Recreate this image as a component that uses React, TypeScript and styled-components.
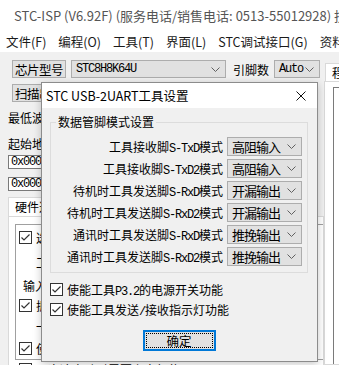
import React from 'react'
import styled, { createGlobalStyle } from 'styled-components'

const GlobalStyle = createGlobalStyle`
  html, body {
    margin: 0;
    padding: 0;
    background: #f0f0f0;
  }
  body {
    font-family: "Noto Sans CJK SC", sans-serif;
    color: #000;
  }
`

const Screen = styled.div`
  position: relative;
  width: 339px;
  height: 365px;
  overflow: hidden;
  background: #f0f0f0;
  display: flex;
  flex-direction: column;
`

const TitleBar = styled.div`
  height: 30px;
  flex-shrink: 0;
  display: flex;
  align-items: center;
  gap: 7px;
  padding-left: 7px;
  background: #fff;
  color: #555;
  font-size: 13px;
  white-space: nowrap;
`

const MenuBar = styled.div`
  height: 22px;
  flex-shrink: 0;
  display: flex;
  align-items: center;
  background: #fff;
  color: #1a1a1a;
  font-size: 12.5px;
  white-space: nowrap;
`

const MenuItem = styled.span`
  padding: 0 6px;
`

const Main = styled.div`
  flex: 1;
  display: flex;
  min-height: 0;
`

const LeftPane = styled.div`
  width: 316px;
  flex-shrink: 0;
  padding: 8px 0 0 8px;
  display: flex;
  flex-direction: column;
`

const ToolRow = styled.div<{ $top?: number }>`
  display: flex;
  align-items: center;
  gap: 5px;
  height: 18px;
  margin-left: 4px;
  margin-top: ${(p) => p.$top ?? 0}px;
  font-size: 12px;
  white-space: nowrap;
`

const PushButton = styled.div`
  box-sizing: border-box;
  width: 54px;
  height: 18px;
  border: 1px solid #adadad;
  background: #e1e1e1;
  display: flex;
  align-items: center;
  justify-content: center;
  font-size: 12.5px;
  letter-spacing: -0.5px;
  flex-shrink: 0;
`

const Combo = styled.div<{ $width: number; $height: number }>`
  box-sizing: border-box;
  width: ${(p) => p.$width}px;
  height: ${(p) => p.$height}px;
  border: 1px solid #adadad;
  background: #e1e1e1;
  display: flex;
  align-items: center;
  justify-content: space-between;
  padding: 0 5px 0 4px;
  font-size: 13px;
  letter-spacing: -1px;
  flex-shrink: 0;
`

const PinLabel = styled.span`
  margin-left: 2px;
`

const Latin = styled.span`
  font-family: "Liberation Mono", monospace;
  font-size: 12px;
  letter-spacing: -1.2px;
`

const FieldLabel = styled.div<{ $top: number; $left?: number }>`
  margin-top: ${(p) => p.$top}px;
  margin-left: ${(p) => p.$left ?? 0}px;
  height: 16px;
  line-height: 16px;
  font-size: 12px;
  white-space: nowrap;
`

const TextBox = styled.div<{ $top: number }>`
  box-sizing: border-box;
  margin-top: ${(p) => p.$top}px;
  width: 90px;
  height: 14px;
  border: 1px solid #7a7a7a;
  background: #fff;
  display: flex;
  align-items: center;
  padding-left: 2px;
`

const TabHeader = styled.div<{ $top: number }>`
  align-self: flex-start;
  box-sizing: border-box;
  margin-top: ${(p) => p.$top}px;
  height: 19px;
  padding: 0 6px;
  border: 1px solid #d9d9d9;
  border-bottom: none;
  background: #fff;
  font-size: 12px;
  line-height: 18px;
  white-space: nowrap;
`

const TabBody = styled.div`
  flex: 1;
  border: 1px solid #d9d9d9;
  background: #fff;
  padding: 7px 0 0 6px;
  display: flex;
  flex-direction: column;
`

const OptionGroup = styled.div`
  box-sizing: border-box;
  height: 136px;
  border: 1px solid #a0a0a0;
  border-right: none;
  padding: 5px 0 0 3px;
  display: flex;
  flex-direction: column;
`

const CheckRow = styled.div<{ $top: number; $left?: number }>`
  display: flex;
  align-items: center;
  gap: 4px;
  margin-top: ${(p) => p.$top}px;
  margin-left: ${(p) => p.$left ?? 0}px;
  height: 13px;
  font-size: 12px;
  white-space: nowrap;
`

const Box = styled.span`
  box-sizing: border-box;
  width: 13px;
  height: 13px;
  border: 1px solid #333;
  background: #fff;
  display: inline-flex;
  align-items: center;
  justify-content: center;
  flex-shrink: 0;
`

const RightPane = styled.div`
  flex: 1;
  padding-top: 11px;
  display: flex;
  flex-direction: column;
`

const SideTab = styled.div`
  align-self: flex-start;
  box-sizing: border-box;
  height: 18px;
  margin-left: 1px;
  padding: 0 6px;
  border: 1px solid #d9d9d9;
  border-bottom: none;
  background: #fff;
  font-size: 12px;
  line-height: 17px;
  white-space: nowrap;
`

const SidePanel = styled.div`
  flex: 1;
  border: 1px solid #d9d9d9;
  border-right: none;
  background: #fff;
  padding: 5px 0 0 8px;
  display: flex;
`

const SideInner = styled.div`
  flex: 1;
  border: 1px solid #7a7a7a;
  border-right: none;
  border-bottom: none;
`

/* ---- dialog ---- */

const Dialog = styled.div`
  position: absolute;
  left: 41px;
  top: 82px;
  width: 277px;
  height: 280px;
  box-sizing: border-box;
  border: 1px solid #8c8c8c;
  background: #f0f0f0;
  box-shadow: 0 2px 8px rgba(0, 0, 0, 0.22);
  display: flex;
  flex-direction: column;
`

const DialogTitle = styled.div`
  height: 25px;
  flex-shrink: 0;
  display: flex;
  align-items: center;
  padding-left: 4px;
  background: #fff;
  font-size: 12.5px;
  white-space: nowrap;
`

const DialogTitleText = styled.span`
  flex: 1;
`

const CloseButton = styled.div`
  width: 32px;
  height: 25px;
  display: flex;
  align-items: center;
  justify-content: center;
`

const DialogBody = styled.div`
  flex: 1;
  display: flex;
  flex-direction: column;
  padding: 6px 9px 0 8px;
`

const GroupBox = styled.fieldset`
  margin: 0;
  padding: 7px 5px 6px 5px;
  border: 1px solid #dcdcdc;
  min-width: 0;
`

const GroupLegend = styled.legend`
  padding: 0 2px;
  font-size: 12px;
  line-height: 16px;
`

const ModeGrid = styled.div`
  display: grid;
  grid-template-columns: 1fr 75px;
  column-gap: 4px;
  row-gap: 3px;
  align-items: center;
`

const ModeLabel = styled.span`
  text-align: right;
  font-size: 12px;
  white-space: nowrap;
`

const DialogChecks = styled.div`
  display: flex;
  flex-direction: column;
`

const OkButton = styled.div`
  align-self: center;
  box-sizing: border-box;
  margin-top: 14px;
  width: 73px;
  height: 21px;
  border: 2px solid #0078d7;
  background: #e1e1e1;
  padding: 1px;
  display: flex;
`

const FocusRect = styled.span`
  flex: 1;
  border: 1px dotted #000;
  display: flex;
  align-items: center;
  justify-content: center;
  font-size: 12.5px;
`

const mixed = (text: string) =>
  text.split(/([\x20-\x7e]+)/).map((part, i) =>
    /^[\x20-\x7e]+$/.test(part) ? <Latin key={i}>{part}</Latin> : part
  )

const Chevron = () => (
  <svg width="9" height="5" viewBox="0 0 9 5">
    <polyline points="0.5,0.5 4.5,4.5 8.5,0.5" fill="none" stroke="#606060" strokeWidth="1" />
  </svg>
)

const Check = () => (
  <Box>
    <svg width="11" height="11" viewBox="0 0 11 11">
      <polyline points="1.5,5.5 4,8 9.5,2.5" fill="none" stroke="#333" strokeWidth="1.2" />
    </svg>
  </Box>
)

const AppIcon = () => (
  <svg width="14" height="14" viewBox="0 0 14 14">
    <g fill="none" stroke="#e8336b" strokeWidth="1.3">
      <path d="M1 5 A8 8 0 0 1 9 13" />
      <path d="M1 2 A11 11 0 0 1 12 13" />
      <path d="M1 8 A5 5 0 0 1 6 13" />
    </g>
    <g stroke="#2456c8" strokeWidth="0.9">
      <path d="M0.5 10.5 H5 M0.5 12.5 H5 M1.5 9.5 V13.5 M3.5 9.5 V13.5" />
      <path d="M10 11 H13.5 M10 12.8 H13.5 M11 10 V13.5 M12.8 10 V13.5" />
    </g>
  </svg>
)

const pinModes: [string, string][] = [
  ['工具接收脚S-TxD模式', '高阻输入'],
  ['工具接收脚S-TxD2模式', '高阻输入'],
  ['待机时工具发送脚S-RxD模式', '开漏输出'],
  ['待机时工具发送脚S-RxD2模式', '开漏输出'],
  ['通讯时工具发送脚S-RxD模式', '推挽输出'],
  ['通讯时工具发送脚S-RxD2模式', '推挽输出'],
]

const menus = ['文件(F)', '编程(O)', '工具(T)', '界面(L)', 'STC调试接口(G)', '资料下载(D)']

export default function App() {
  return (
    <Screen>
      <GlobalStyle />
      <TitleBar>
        <AppIcon />
        <span>STC-ISP (V6.92F) (服务电话/销售电话: 0513-55012928) 技术支持</span>
      </TitleBar>
      <MenuBar>
        {menus.map((m) => (
          <MenuItem key={m}>{m}</MenuItem>
        ))}
      </MenuBar>
      <Main>
        <LeftPane>
          <ToolRow>
            <PushButton>芯片型号</PushButton>
            <Combo $width={155} $height={18}>
              <Latin>STC8H8K64U</Latin>
              <Chevron />
            </Combo>
            <PinLabel>引脚数</PinLabel>
            <Combo $width={46} $height={18}>
              <Latin>Auto</Latin>
              <Chevron />
            </Combo>
          </ToolRow>
          <ToolRow $top={6}>
            <PushButton>扫描串口</PushButton>
          </ToolRow>
          <FieldLabel $top={8}>最低波特率</FieldLabel>
          <FieldLabel $top={10}>起始地址</FieldLabel>
          <TextBox $top={3}>
            <Latin>0x0000</Latin>
          </TextBox>
          <TextBox $top={8}>
            <Latin>0x0000</Latin>
          </TextBox>
          <TabHeader $top={6}>硬件选项</TabHeader>
          <TabBody>
            <OptionGroup>
              <CheckRow $top={1}>
                <Check />
                <span>选择使用内部IRC时钟</span>
              </CheckRow>
              <FieldLabel $top={11} $left={17}>工作在内部时钟</FieldLabel>
              <FieldLabel $top={7} $left={4}>{mixed('输入用户程序运行时的IRC频率')}</FieldLabel>
              <CheckRow $top={5}>
                <Check />
                <span>振荡器放大增益</span>
              </CheckRow>
              <FieldLabel $top={7} $left={17}>一般不需要选择</FieldLabel>
              <CheckRow $top={7}>
                <Check />
                <span>使用快速下载模式</span>
              </CheckRow>
            </OptionGroup>
            <CheckRow $top={3} $left={4}>
              <Box />
              <span>下次冷启动时需要上电复位</span>
            </CheckRow>
          </TabBody>
        </LeftPane>
        <RightPane>
          <SideTab>程序文件</SideTab>
          <SidePanel>
            <SideInner />
          </SidePanel>
        </RightPane>
      </Main>

      <Dialog>
        <DialogTitle>
          <DialogTitleText>STC USB-2UART工具设置</DialogTitleText>
          <CloseButton>
            <svg width="10" height="10" viewBox="0 0 10 10">
              <path d="M0.5 0.5 L9.5 9.5 M9.5 0.5 L0.5 9.5" stroke="#111" strokeWidth="1" />
            </svg>
          </CloseButton>
        </DialogTitle>
        <DialogBody>
          <GroupBox>
            <GroupLegend>数据管脚模式设置</GroupLegend>
            <ModeGrid>
              {pinModes.map(([label, mode]) => (
                <React.Fragment key={label}>
                  <ModeLabel>{mixed(label)}</ModeLabel>
                  <Combo $width={75} $height={19}>
                    <span>{mode}</span>
                    <Chevron />
                  </Combo>
                </React.Fragment>
              ))}
            </ModeGrid>
          </GroupBox>
          <DialogChecks>
            <CheckRow $top={10}>
              <Check />
              <span>{mixed('使能工具P3.2的电源开关功能')}</span>
            </CheckRow>
            <CheckRow $top={7}>
              <Check />
              <span>{mixed('使能工具发送/接收指示灯功能')}</span>
            </CheckRow>
          </DialogChecks>
          <OkButton>
            <FocusRect>确定</FocusRect>
          </OkButton>
        </DialogBody>
      </Dialog>
    </Screen>
  )
}
